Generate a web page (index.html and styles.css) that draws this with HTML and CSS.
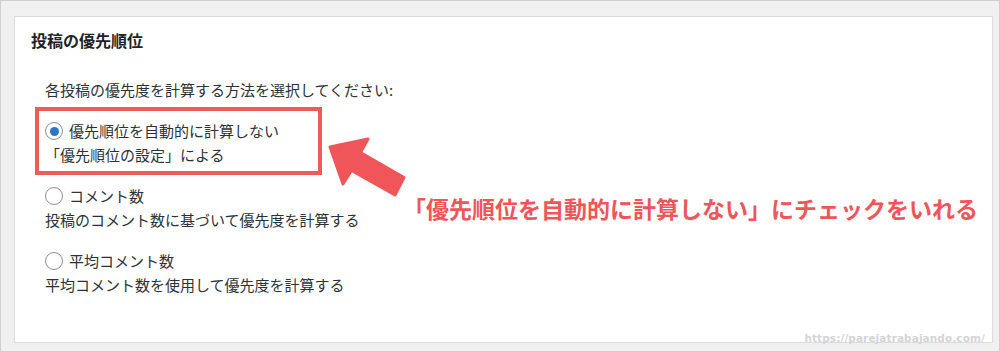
FILE: index.html
```html
<!DOCTYPE html>
<html lang="ja">
<head>
<meta charset="utf-8">
<title>投稿の優先順位</title>
<link rel="stylesheet" href="styles.css">
</head>
<body>
  <section class="panel">
    <h2 class="panel-title">投稿の優先順位</h2>
    <div class="panel-body">
      <p class="instruction">各投稿の優先度を計算する方法を選択してください:</p>
      <div class="options">
        <div class="option highlight">
          <div class="option-label"><span class="radio checked"></span><span>優先順位を自動的に計算しない</span></div>
          <div class="option-desc">「優先順位の設定」による</div>
        </div>
        <div class="option">
          <div class="option-label"><span class="radio"></span><span>コメント数</span></div>
          <div class="option-desc">投稿のコメント数に基づいて優先度を計算する</div>
        </div>
        <div class="option">
          <div class="option-label"><span class="radio"></span><span>平均コメント数</span></div>
          <div class="option-desc">平均コメント数を使用して優先度を計算する</div>
        </div>
      </div>
    </div>
  </section>

  <svg class="arrow" viewBox="320 130 95 75" width="95" height="75" aria-hidden="true">
    <path d="M330 147 L368 139 L360.5 152.5 L404 177.5 L395 195 L351.5 170.5 L343 184 Z" fill="#ef5559" stroke="#ef5559" stroke-width="3" stroke-linejoin="round"/>
  </svg>
  <div class="callout">「優先順位を自動的に計算しない」にチェックをいれる</div>
  <div class="watermark">https://parejatrabajando.com/</div>
</body>
</html>
```

FILE: styles.css
```css
html, body {
  margin: 0;
  padding: 0;
}

body {
  position: relative;
  box-sizing: border-box;
  width: 1000px;
  height: 352px;
  display: flex;
  flex-direction: column;
  background: #f0f0f1;
  border: 1px solid #cfcfd1;
  font-family: "Noto Sans CJK JP", "Noto Sans", sans-serif;
  color: #2c3338;
  overflow: hidden;
}

.panel {
  flex: 1;
  margin: 15px 6px 8px 13px;
  background: #ffffff;
  border: 1px solid #dcdcde;
}

.panel-title {
  margin: 0;
  padding: 11px 16px 0;
  font-size: 16px;
  line-height: 24px;
  font-weight: 700;
  color: #1d2327;
}

.panel-body {
  margin-left: 20px;
}

.instruction {
  margin: 26px 0 5px;
  padding-left: 10px;
  font-size: 15px;
  line-height: 24px;
}

.options {
  display: flex;
  flex-direction: column;
  align-items: flex-start;
}

.option {
  padding: 9px 10px 8px;
  font-size: 15px;
  line-height: 24px;
}

.option.highlight {
  box-sizing: border-box;
  width: 287px;
  border: 4px solid #ef5a5d;
  padding: 8px 6px 4px;
}

.option-label {
  display: flex;
  align-items: center;
  gap: 6px;
}

.radio {
  box-sizing: border-box;
  flex: none;
  width: 18px;
  height: 18px;
  border: 1px solid #8c8f94;
  border-radius: 50%;
  background: #fff;
  display: flex;
  align-items: center;
  justify-content: center;
}

.radio.checked::after {
  content: "";
  width: 9px;
  height: 9px;
  border-radius: 50%;
  background: #2b77c7;
}

.arrow {
  position: absolute;
  left: 319px;
  top: 129px;
}

.callout {
  position: absolute;
  left: 402px;
  top: 195px;
  font-size: 23px;
  line-height: 24px;
  font-weight: 700;
  color: #ef5559;
  white-space: nowrap;
}

.watermark {
  position: absolute;
  right: 14px;
  top: 329px;
  font-family: "DejaVu Sans", sans-serif;
  font-size: 10.5px;
  line-height: 16px;
  font-weight: 700;
  letter-spacing: 0.1px;
  color: #d4d4d6;
}
```
